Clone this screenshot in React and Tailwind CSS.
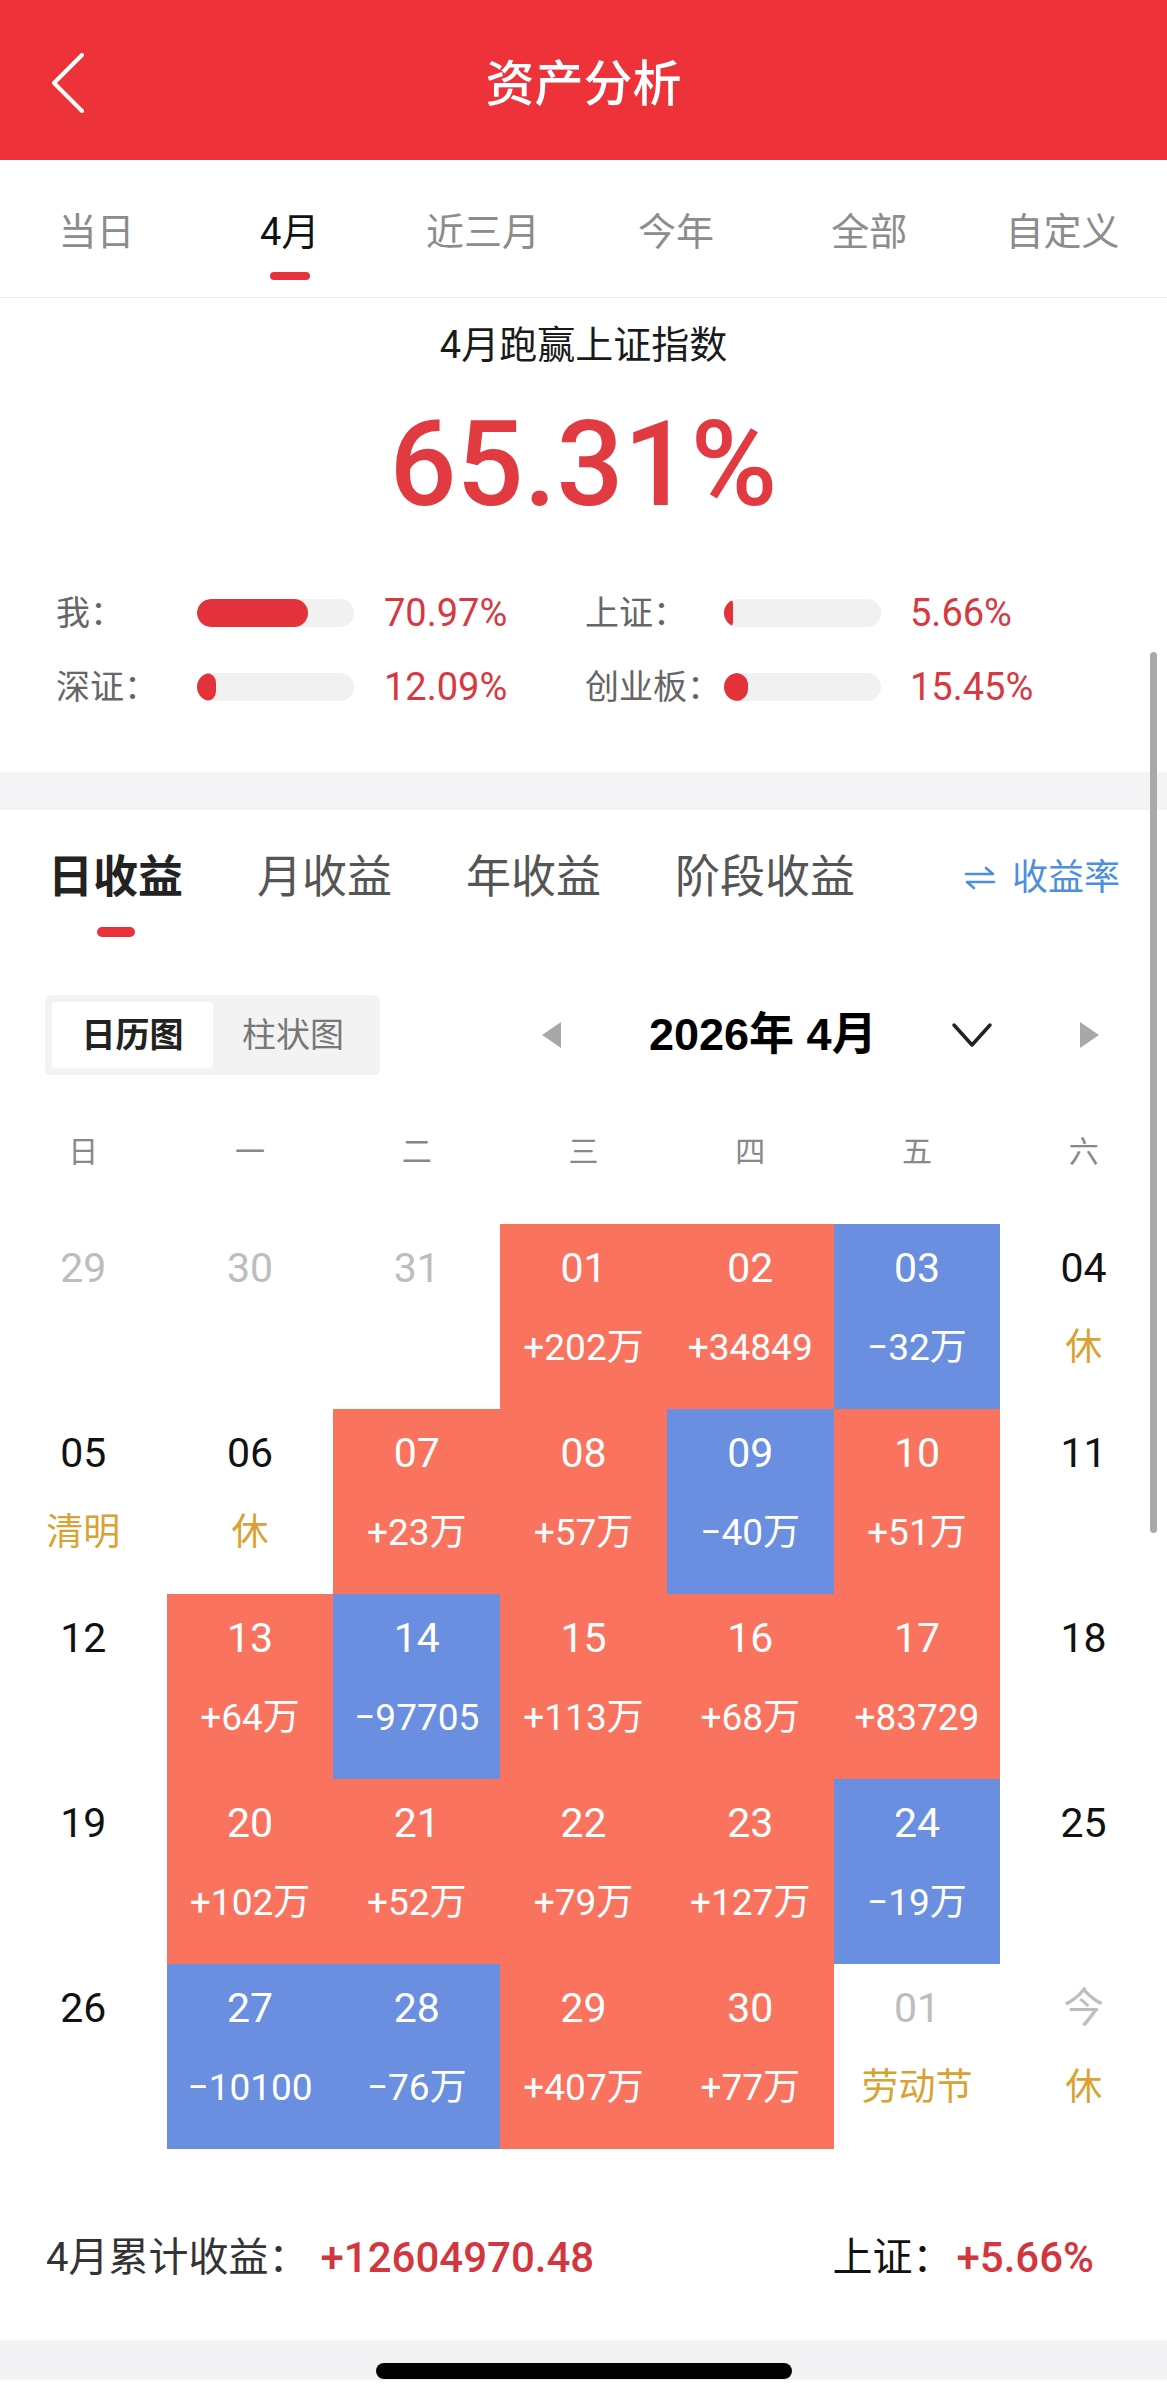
import React from "react";

const tabs = ["当日", "4月", "近三月", "今年", "全部", "自定义"];

const cal = [
  [
    { d: "29", k: "o" },
    { d: "30", k: "o" },
    { d: "31", k: "o" },
    { d: "01", k: "r", v: "+202万" },
    { d: "02", k: "r", v: "+34849" },
    { d: "03", k: "b", v: "−32万" },
    { d: "04", k: "n", v: "休" },
  ],
  [
    { d: "05", k: "n", v: "清明" },
    { d: "06", k: "n", v: "休" },
    { d: "07", k: "r", v: "+23万" },
    { d: "08", k: "r", v: "+57万" },
    { d: "09", k: "b", v: "−40万" },
    { d: "10", k: "r", v: "+51万" },
    { d: "11", k: "n" },
  ],
  [
    { d: "12", k: "n" },
    { d: "13", k: "r", v: "+64万" },
    { d: "14", k: "b", v: "−97705" },
    { d: "15", k: "r", v: "+113万" },
    { d: "16", k: "r", v: "+68万" },
    { d: "17", k: "r", v: "+83729" },
    { d: "18", k: "n" },
  ],
  [
    { d: "19", k: "n" },
    { d: "20", k: "r", v: "+102万" },
    { d: "21", k: "r", v: "+52万" },
    { d: "22", k: "r", v: "+79万" },
    { d: "23", k: "r", v: "+127万" },
    { d: "24", k: "b", v: "−19万" },
    { d: "25", k: "n" },
  ],
  [
    { d: "26", k: "n" },
    { d: "27", k: "b", v: "−10100" },
    { d: "28", k: "b", v: "−76万" },
    { d: "29", k: "r", v: "+407万" },
    { d: "30", k: "r", v: "+77万" },
    { d: "01", k: "o", v: "劳动节" },
    { d: "今", k: "o", v: "休" },
  ],
];

function Cell({ c }) {
  const colored = c.k === "r" || c.k === "b";
  const bg =
    c.k === "r" ? "bg-[#FA735F]" : c.k === "b" ? "bg-[#6A8EE0]" : "bg-white";
  const numCls = colored
    ? "text-white"
    : c.k === "o"
    ? "text-[#BDBDBD]"
    : "text-[#111111]";
  const valCls = colored ? "text-white" : "text-[#D9A233]";
  return (
    <div className={`h-[185px] flex flex-col items-center pt-[20px] ${bg}`}>
      <span className={`text-[41px] leading-[48px] ${numCls}`}>{c.d}</span>
      {c.v && (
        <span className={`mt-[34px] text-[37px] leading-[44px] ${valCls}`}>
          {c.v}
        </span>
      )}
    </div>
  );
}

function Bar({ p }) {
  return (
    <div className="w-[157px] h-[28px] rounded-full bg-[#F1F1F1] overflow-hidden">
      <div
        className="h-full rounded-full bg-[#E3323A]"
        style={{ width: `${p}%` }}
      />
    </div>
  );
}

function StatRow({ l1, p1, l2, p2 }) {
  return (
    <div className="flex items-center h-[44px] pl-[56px]">
      <span className="w-[141px] text-[34px] leading-[44px] text-[#666666]">
        {l1}
      </span>
      <Bar p={p1} />
      <span className="ml-[30px] w-[201px] text-[38px] leading-[44px] text-[#D8383F]">
        {p1.toFixed(2)}%
      </span>
      <span className="w-[139px] text-[34px] leading-[44px] text-[#666666]">
        {l2}
      </span>
      <Bar p={p2} />
      <span className="ml-[29px] text-[38px] leading-[44px] text-[#D8383F]">
        {p2.toFixed(2)}%
      </span>
    </div>
  );
}

export default function App() {
  return (
    <div className="w-[1167px] h-[2403px] bg-white relative overflow-hidden font-[family-name:Roboto,'Noto_Sans_CJK_SC',sans-serif]">
      {/* Header */}
      <div className="h-[160px] bg-[#EE3239] grid grid-cols-[1fr_auto_1fr] items-center">
        <div className="pl-[50px] pt-[6px] flex items-center">
          <svg width="36" height="60" viewBox="0 0 36 60">
            <polyline
              points="32,2 4,30 32,58"
              fill="none"
              stroke="white"
              strokeWidth="4"
              strokeLinecap="round"
              strokeLinejoin="round"
            />
          </svg>
        </div>
        <span className="text-white text-[49px] leading-none font-medium pt-[8px]">
          资产分析
        </span>
        <div />
      </div>

      {/* Period tabs */}
      <div className="grid grid-cols-6 pr-[8px] border-b border-[#EDEDED] h-[138px]">
        {tabs.map((t, i) => (
          <div key={t} className="flex flex-col items-center pt-[50px]">
            <span
              className={
                i === 1
                  ? "text-[38px] leading-[44px] text-[#111111]"
                  : "text-[38px] leading-[44px] text-[#8C8C8C]"
              }
            >
              {t}
            </span>
            {i === 1 && (
              <div className="mt-[18px] w-[40px] h-[8px] rounded-full bg-[#E8323A]" />
            )}
          </div>
        ))}
      </div>

      {/* Summary */}
      <div className="flex flex-col items-center pt-[23px] h-[474px]">
        <div className="text-[38px] leading-[48px] text-[#1A1A1A]">
          4月跑赢上证指数
        </div>
        <div className="mt-[37px] text-[118px] leading-none font-medium text-[#E23A41]">
          65.31%
        </div>
        <div className="mt-[67px] self-stretch flex flex-col gap-[30px]">
          <StatRow l1="我：" p1={70.97} l2="上证：" p2={5.66} />
          <StatRow l1="深证：" p1={12.09} l2="创业板：" p2={15.45} />
        </div>
      </div>

      {/* Gray separator */}
      <div className="h-[38px] bg-[#F4F4F6]" />

      {/* Profit section */}
      <div className="pt-[42px]">
        <div className="flex items-start pl-[48px] pr-[47px]">
          <div className="flex flex-col items-center">
            <span className="text-[45px] leading-[52px] font-bold text-[#222222]">
              日收益
            </span>
            <div className="mt-[23px] w-[38px] h-[10px] rounded-full bg-[#E8323A]" />
          </div>
          <span className="ml-[74px] text-[45px] leading-[52px] text-[#555555]">
            月收益
          </span>
          <span className="ml-[74px] text-[45px] leading-[52px] text-[#555555]">
            年收益
          </span>
          <span className="ml-[74px] text-[45px] leading-[52px] text-[#555555]">
            阶段收益
          </span>
          <div className="ml-auto flex items-center h-[52px] gap-[16px] text-[#4C8FDB]">
            <svg width="32" height="24" viewBox="0 0 32 24">
              <path
                d="M2 8 H29 L22 2 M30 16 H3 L10 22"
                fill="none"
                stroke="#4C8FDB"
                strokeWidth="2.6"
                strokeLinecap="round"
                strokeLinejoin="round"
              />
            </svg>
            <span className="text-[36px] leading-[52px]">收益率</span>
          </div>
        </div>

        {/* Toggle + month nav */}
        <div className="mt-[58px] flex items-center h-[80px]">
          <div className="ml-[45px] w-[335px] h-[80px] bg-[#F3F3F3] rounded-[6px] p-[7px] flex items-center">
            <div className="w-[161px] h-[66px] bg-white rounded-[4px] flex items-center justify-center text-[34px] font-bold text-[#222222]">
              日历图
            </div>
            <div className="flex-1 flex items-center justify-center text-[34px] text-[#777777]">
              柱状图
            </div>
          </div>
          <div className="ml-[162px] w-0 h-0 border-y-[13px] border-y-transparent border-r-[19px] border-r-[#A8A8A8]" />
          <div className="ml-[88px] w-[302px] text-[45px] leading-[52px] font-bold text-black font-[family-name:'Liberation_Sans','Noto_Sans_CJK_SC',sans-serif]">
            2026年 4月
          </div>
          <svg width="42" height="26" viewBox="0 0 42 26">
            <polyline
              points="3,3 21,23 39,3"
              fill="none"
              stroke="#222222"
              strokeWidth="3.5"
              strokeLinecap="round"
              strokeLinejoin="round"
            />
          </svg>
          <div className="ml-[87px] w-0 h-0 border-y-[13px] border-y-transparent border-l-[19px] border-l-[#A8A8A8]" />
        </div>

        {/* Weekdays */}
        <div className="mt-[60px] grid grid-cols-7">
          {["日", "一", "二", "三", "四", "五", "六"].map((w) => (
            <div
              key={w}
              className="text-center text-[30px] leading-[34px] text-[#888888]"
            >
              {w}
            </div>
          ))}
        </div>

        {/* Calendar */}
        <div className="mt-[55px] grid grid-cols-7">
          {cal.flat().map((c, i) => (
            <Cell key={i} c={c} />
          ))}
        </div>

        {/* Footer totals */}
        <div className="mt-[86px] flex items-center justify-between pl-[46px] pr-[73px] h-[46px]">
          <div className="flex items-center">
            <span className="text-[40px] leading-[46px] text-[#333333]">
              4月累计收益：
            </span>
            <span className="ml-[12px] text-[42px] leading-[46px] font-medium text-[#D2363E]">
              +12604970.48
            </span>
          </div>
          <div className="flex items-center">
            <span className="text-[40px] leading-[46px] text-[#111111]">
              上证：
            </span>
            <span className="ml-[4px] text-[42px] leading-[46px] font-medium text-[#D2363E]">
              +5.66%
            </span>
          </div>
        </div>

        {/* Bottom bar */}
        <div className="mt-[59px] h-[40px] bg-[#F3F3F5] flex justify-center items-end pb-[1px]">
          <div className="w-[416px] h-[16px] rounded-full bg-black" />
        </div>
      </div>

      {/* Scrollbar overlay */}
      <div className="absolute left-[1150px] top-[652px] w-[7px] h-[881px] rounded-full bg-[#A9A9A9]" />
    </div>
  );
}
